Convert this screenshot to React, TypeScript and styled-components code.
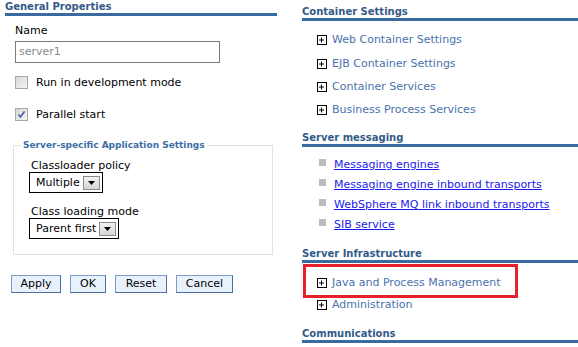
import React from "react";
import styled, { createGlobalStyle } from "styled-components";

const Global = createGlobalStyle`
  html, body { margin: 0; padding: 0; background: #fff; }
  body { font-family: "DejaVu Sans", Verdana, sans-serif; font-size: 11px; color: #000; }
  * { box-sizing: border-box; }
`;

const Page = styled.div`
  display: grid;
  grid-template-columns: 272px 276px;
  column-gap: 25px;
  padding-left: 5px;
  width: 578px;
  height: 347px;
  overflow: hidden;
`;

const Column = styled.div`
  display: flex;
  flex-direction: column;
`;

const SectionHeader = styled.div<{ $top?: number }>`
  font-weight: bold;
  font-size: 10px;
  line-height: 13px;
  color: #335a88;
  border-bottom: 3px solid #3a6b9e;
  margin-top: ${(p) => p.$top ?? 0}px;
`;

const FormBody = styled.div`
  display: flex;
  flex-direction: column;
  padding-left: 10px;
`;

const FieldLabel = styled.div<{ $top?: number }>`
  line-height: 13px;
  margin-top: ${(p) => p.$top ?? 0}px;
`;

const TextInput = styled.div`
  margin-top: 4px;
  width: 205px;
  height: 22px;
  border: 1px solid #7a7a7a;
  color: #8a8a8a;
  padding-left: 3px;
  line-height: 20px;
`;

const CheckRow = styled.div<{ $top: number }>`
  display: flex;
  align-items: center;
  gap: 8px;
  margin-top: ${(p) => p.$top}px;
  height: 13px;
  line-height: 13px;
`;

const CheckBox = styled.span`
  width: 13px;
  height: 13px;
  border: 1px solid #a8a8a8;
  background: linear-gradient(135deg, #d8d8d8, #f4f4f4);
  display: inline-flex;
  align-items: center;
  justify-content: center;
`;

const Fieldset = styled.div`
  position: relative;
  margin-top: 24px;
  margin-left: -2px;
  width: 260px;
  height: 110px;
  border: 1px solid #e2e2e2;
  padding: 12px 0 0 15px;
  display: flex;
  flex-direction: column;
`;

const Legend = styled.div`
  position: absolute;
  top: -7px;
  left: 7px;
  padding: 0 2px;
  background: #fff;
  color: #3a6ea5;
  font-weight: bold;
  font-size: 9px;
  line-height: 13px;
`;

const SelectLabel = styled.div<{ $top?: number }>`
  line-height: 13px;
  margin-top: ${(p) => p.$top ?? 0}px;
  margin-left: 2px;
`;

const Select = styled.div`
  display: inline-flex;
  align-self: flex-start;
  align-items: center;
  height: 21px;
  border: 1px solid #000;
  padding: 0 2px 0 6px;
  gap: 3px;
`;

const DropBtn = styled.span`
  width: 17px;
  height: 14px;
  border: 1px solid #8a8a8a;
  background: linear-gradient(#f2f2f2, #d6d6d6);
  display: inline-flex;
  align-items: center;
  justify-content: center;
`;

const ButtonRow = styled.div`
  display: flex;
  gap: 9px;
  margin-top: 20px;
  margin-left: 6px;
`;

const Button = styled.div<{ $w: number }>`
  width: ${(p) => p.$w}px;
  height: 18px;
  border: 1px solid #7a9cc8;
  border-right-color: #4b6f9f;
  border-bottom-color: #4b6f9f;
  background: #e9f1fd;
  text-align: center;
  line-height: 16px;
`;

const List = styled.div<{ $top: number }>`
  display: flex;
  flex-direction: column;
  margin-top: ${(p) => p.$top}px;
`;

const ExpandItem = styled.div<{ $h?: number }>`
  position: relative;
  display: flex;
  align-items: center;
  height: ${(p) => p.$h ?? 23}px;
  padding-left: 14px;
  gap: 5px;
  color: #4a72ad;
`;

const LinkItem = styled.div`
  display: flex;
  align-items: center;
  height: 20px;
  padding-left: 17px;
  gap: 8px;
`;

const Bullet = styled.span`
  width: 7px;
  height: 7px;
  background: #bcbcbc;
  margin-top: -5px;
`;

const Link = styled.a`
  color: #1a1aee;
  text-decoration: underline;
`;

const Highlight = styled.div`
  position: absolute;
  left: 1px;
  top: -7px;
  width: 215px;
  height: 34px;
  border: 3px solid #e8202a;
  pointer-events: none;
`;

const Plus = () => (
  <svg width="11" height="11" viewBox="0 0 11 11">
    <rect x="1.5" y="1.5" width="9" height="9" fill="#fff" stroke="#000" />
    <path d="M3 6h5M5.5 3.5v5" stroke="#000" />
  </svg>
);

const Arrow = () => (
  <svg width="7" height="4" viewBox="0 0 7 4">
    <path d="M0 0h7L3.5 4z" fill="#000" />
  </svg>
);

const Check = () => (
  <svg width="9" height="9" viewBox="0 0 9 9">
    <path d="M1.5 4.5l2 2.5L7.5 1.5" fill="none" stroke="#4a5fa8" strokeWidth="1.6" />
  </svg>
);

export default function App() {
  return (
    <>
      <Global />
      <Page>
        <Column>
          <SectionHeader>General Properties</SectionHeader>
          <FormBody>
            <FieldLabel $top={8}>Name</FieldLabel>
            <TextInput>server1</TextInput>
            <CheckRow $top={13}>
              <CheckBox />
              <span>Run in development mode</span>
            </CheckRow>
            <CheckRow $top={19}>
              <CheckBox>
                <Check />
              </CheckBox>
              <span>Parallel start</span>
            </CheckRow>
            <Fieldset>
              <Legend>Server-specific Application Settings</Legend>
              <SelectLabel $top={1}>Classloader policy</SelectLabel>
              <Select>
                <span>Multiple</span>
                <DropBtn>
                  <Arrow />
                </DropBtn>
              </Select>
              <SelectLabel $top={12}>Class loading mode</SelectLabel>
              <Select>
                <span>Parent first</span>
                <DropBtn>
                  <Arrow />
                </DropBtn>
              </Select>
            </Fieldset>
          </FormBody>
          <ButtonRow>
            <Button $w={50}>Apply</Button>
            <Button $w={36}>OK</Button>
            <Button $w={52}>Reset</Button>
            <Button $w={57}>Cancel</Button>
          </ButtonRow>
        </Column>
        <Column>
          <SectionHeader $top={5}>Container Settings</SectionHeader>
          <List $top={7}>
            <ExpandItem $h={23.4}><Plus />Web Container Settings</ExpandItem>
            <ExpandItem $h={23.4}><Plus />EJB Container Settings</ExpandItem>
            <ExpandItem $h={23.4}><Plus />Container Services</ExpandItem>
            <ExpandItem $h={23.4}><Plus />Business Process Services</ExpandItem>
          </List>
          <SectionHeader $top={9}>Server messaging</SectionHeader>
          <List $top={8}>
            <LinkItem><Bullet /><Link>Messaging engines</Link></LinkItem>
            <LinkItem><Bullet /><Link>Messaging engine inbound transports</Link></LinkItem>
            <LinkItem><Bullet /><Link>WebSphere MQ link inbound transports</Link></LinkItem>
            <LinkItem><Bullet /><Link>SIB service</Link></LinkItem>
          </List>
          <SectionHeader $top={12}>Server Infrastructure</SectionHeader>
          <List $top={8}>
            <ExpandItem>
              <Plus />Java and Process Management
              <Highlight />
            </ExpandItem>
            <ExpandItem $h={22}><Plus />Administration</ExpandItem>
          </List>
          <SectionHeader $top={11}>Communications</SectionHeader>
        </Column>
      </Page>
    </>
  );
}
